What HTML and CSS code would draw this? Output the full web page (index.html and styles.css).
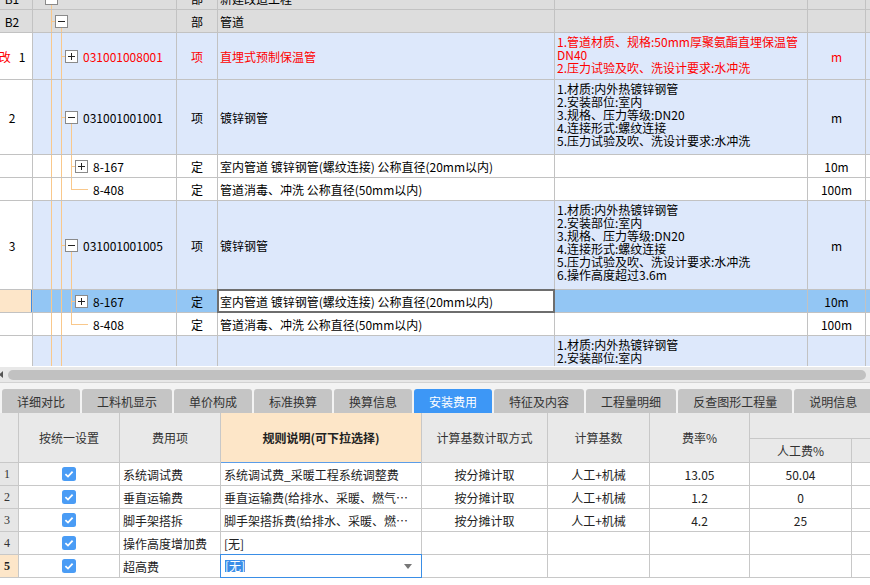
FILE: index.html
```html
<!DOCTYPE html>
<html lang="zh-CN">
<head>
<meta charset="utf-8">
<title>安装费用</title>
<link rel="stylesheet" href="styles.css">
</head>
<body>
<div class="top">
  <div class="tgrid">
    <div class="row r-grey">
      <div class="lab">B1</div>
      <div class="tree t0"><svg class="bx" width="13" height="13" viewBox="0 0 13 13"><rect x="0.5" y="0.5" width="12" height="12" fill="#fff" stroke="#8a8a8a"/><path d="M3 6.5h7" stroke="#222"/></svg></div>
      <div class="typ">部</div>
      <div class="nm">新建改造工程</div>
      <div class="ds"></div>
      <div class="un"></div>
      <div class="ex"></div>
    </div>
    <div class="row r-grey">
      <div class="lab">B2</div>
      <div class="tree t1"><svg class="bx" width="13" height="13" viewBox="0 0 13 13"><rect x="0.5" y="0.5" width="12" height="12" fill="#fff" stroke="#8a8a8a"/><path d="M3 6.5h7" stroke="#222"/></svg></div>
      <div class="typ">部</div>
      <div class="nm">管道</div>
      <div class="ds"></div>
      <div class="un"></div>
      <div class="ex"></div>
    </div>
    <div class="row r-blue red">
      <div class="lab"><span class="mod">改</span><span class="blk">1</span></div>
      <div class="tree t2c"><svg class="bx" width="13" height="13" viewBox="0 0 13 13"><rect x="0.5" y="0.5" width="12" height="12" fill="#fff" stroke="#8a8a8a"/><path d="M3 6.5h7M6.5 3v7" stroke="#222"/></svg><span class="code">031001008001</span></div>
      <div class="typ">项</div>
      <div class="nm">直埋式预制保温管</div>
      <div class="ds">1.管道材质、规格:50mm厚聚氨酯直埋保温管<br>DN40<br>2.压力试验及吹、洗设计要求:水冲洗</div>
      <div class="un">m</div>
      <div class="ex"></div>
    </div>
    <div class="row r-blue">
      <div class="lab">2</div>
      <div class="tree t2e"><svg class="bx" width="13" height="13" viewBox="0 0 13 13"><rect x="0.5" y="0.5" width="12" height="12" fill="#fff" stroke="#8a8a8a"/><path d="M3 6.5h7" stroke="#222"/></svg><span class="code">031001001001</span></div>
      <div class="typ">项</div>
      <div class="nm">镀锌钢管</div>
      <div class="ds">1.材质:内外热镀锌钢管<br>2.安装部位:室内<br>3.规格、压力等级:DN20<br>4.连接形式:螺纹连接<br>5.压力试验及吹、洗设计要求:水冲洗</div>
      <div class="un">m</div>
      <div class="ex"></div>
    </div>
    <div class="row r-white">
      <div class="lab"></div>
      <div class="tree t3"><svg class="bx" width="13" height="13" viewBox="0 0 13 13"><rect x="0.5" y="0.5" width="12" height="12" fill="#fff" stroke="#8a8a8a"/><path d="M3 6.5h7M6.5 3v7" stroke="#222"/></svg><span class="code">8-167</span></div>
      <div class="typ">定</div>
      <div class="nm">室内管道 镀锌钢管(螺纹连接) 公称直径(20mm以内)</div>
      <div class="ds"></div>
      <div class="un">10m</div>
      <div class="ex"></div>
    </div>
    <div class="row r-white">
      <div class="lab"></div>
      <div class="tree t3l"><span class="code">8-408</span></div>
      <div class="typ">定</div>
      <div class="nm">管道消毒、冲洗 公称直径(50mm以内)</div>
      <div class="ds"></div>
      <div class="un">100m</div>
      <div class="ex"></div>
    </div>
    <div class="row r-blue">
      <div class="lab">3</div>
      <div class="tree t2e"><svg class="bx" width="13" height="13" viewBox="0 0 13 13"><rect x="0.5" y="0.5" width="12" height="12" fill="#fff" stroke="#8a8a8a"/><path d="M3 6.5h7" stroke="#222"/></svg><span class="code">031001001005</span></div>
      <div class="typ">项</div>
      <div class="nm">镀锌钢管</div>
      <div class="ds">1.材质:内外热镀锌钢管<br>2.安装部位:室内<br>3.规格、压力等级:DN20<br>4.连接形式:螺纹连接<br>5.压力试验及吹、洗设计要求:水冲洗<br>6.操作高度超过3.6m</div>
      <div class="un">m</div>
      <div class="ex"></div>
    </div>
    <div class="row r-sel">
      <div class="lab"></div>
      <div class="tree t3"><svg class="bx" width="13" height="13" viewBox="0 0 13 13"><rect x="0.5" y="0.5" width="12" height="12" fill="#fff" stroke="#8a8a8a"/><path d="M3 6.5h7M6.5 3v7" stroke="#222"/></svg><span class="code">8-167</span></div>
      <div class="typ">定</div>
      <div class="nm">室内管道 镀锌钢管(螺纹连接) 公称直径(20mm以内)</div>
      <div class="ds"></div>
      <div class="un">10m</div>
      <div class="ex"></div>
    </div>
    <div class="row r-white">
      <div class="lab"></div>
      <div class="tree t3l"><span class="code">8-408</span></div>
      <div class="typ">定</div>
      <div class="nm">管道消毒、冲洗 公称直径(50mm以内)</div>
      <div class="ds"></div>
      <div class="un">100m</div>
      <div class="ex"></div>
    </div>
    <div class="row r-blue">
      <div class="lab"></div>
      <div class="tree t2n"></div>
      <div class="typ"></div>
      <div class="nm"></div>
      <div class="ds">1.材质:内外热镀锌钢管<br>2.安装部位:室内</div>
      <div class="un"></div>
      <div class="ex"></div>
    </div>
  </div>
</div>

<div class="hscroll">
  <svg class="harrow" width="4" height="7" viewBox="0 0 4 7"><path d="M0 3.5L4 0V7Z" fill="#555"/></svg>
  <div class="thumb"></div>
</div>

<div class="tabs">
  <div class="tab">详细对比</div>
  <div class="tab">工料机显示</div>
  <div class="tab">单价构成</div>
  <div class="tab">标准换算</div>
  <div class="tab">换算信息</div>
  <div class="tab active">安装费用</div>
  <div class="tab">特征及内容</div>
  <div class="tab">工程量明细</div>
  <div class="tab">反查图形工程量</div>
  <div class="tab">说明信息</div>
</div>

<div class="bgrid">
  <div class="bh"></div>
  <div class="bh">按统一设置</div>
  <div class="bh">费用项</div>
  <div class="bh hl">规则说明(可下拉选择)</div>
  <div class="bh">计算基数计取方式</div>
  <div class="bh">计算基数</div>
  <div class="bh">费率%</div>
  <div class="bg"></div>
  <div class="bs">人工费%</div>
  <div class="bs"></div>

  <div class="bl">1</div>
  <div class="cb"><svg width="14" height="14" viewBox="0 0 14 14"><rect width="14" height="14" rx="2.5" fill="#4a9cf5"/><path d="M3.4 7.2L6 9.6L10.6 4.7" fill="none" stroke="#fff" stroke-width="1.8"/></svg></div>
  <div class="tx">系统调试费</div>
  <div class="tx">系统调试费_采暖工程系统调整费</div>
  <div class="ct">按分摊计取</div>
  <div class="ct">人工+机械</div>
  <div class="ct">13.05</div>
  <div class="ct">50.04</div>
  <div></div>

  <div class="bl">2</div>
  <div class="cb"><svg width="14" height="14" viewBox="0 0 14 14"><rect width="14" height="14" rx="2.5" fill="#4a9cf5"/><path d="M3.4 7.2L6 9.6L10.6 4.7" fill="none" stroke="#fff" stroke-width="1.8"/></svg></div>
  <div class="tx">垂直运输费</div>
  <div class="tx">垂直运输费(给排水、采暖、燃气…</div>
  <div class="ct">按分摊计取</div>
  <div class="ct">人工+机械</div>
  <div class="ct">1.2</div>
  <div class="ct">0</div>
  <div></div>

  <div class="bl">3</div>
  <div class="cb"><svg width="14" height="14" viewBox="0 0 14 14"><rect width="14" height="14" rx="2.5" fill="#4a9cf5"/><path d="M3.4 7.2L6 9.6L10.6 4.7" fill="none" stroke="#fff" stroke-width="1.8"/></svg></div>
  <div class="tx">脚手架搭拆</div>
  <div class="tx">脚手架搭拆费(给排水、采暖、燃…</div>
  <div class="ct">按分摊计取</div>
  <div class="ct">人工+机械</div>
  <div class="ct">4.2</div>
  <div class="ct">25</div>
  <div></div>

  <div class="bl">4</div>
  <div class="cb"><svg width="14" height="14" viewBox="0 0 14 14"><rect width="14" height="14" rx="2.5" fill="#4a9cf5"/><path d="M3.4 7.2L6 9.6L10.6 4.7" fill="none" stroke="#fff" stroke-width="1.8"/></svg></div>
  <div class="tx">操作高度增加费</div>
  <div class="tx">[无]</div>
  <div></div>
  <div></div>
  <div></div>
  <div></div>
  <div></div>

  <div class="bl act">5</div>
  <div class="cb"><svg width="14" height="14" viewBox="0 0 14 14"><rect width="14" height="14" rx="2.5" fill="#4a9cf5"/><path d="M3.4 7.2L6 9.6L10.6 4.7" fill="none" stroke="#fff" stroke-width="1.8"/></svg></div>
  <div class="tx">超高费</div>
  <div class="tx edit"><span class="selt">[无]</span><svg class="dd" width="8" height="5" viewBox="0 0 8 5"><path d="M0 0H8L4 5Z" fill="#777"/></svg></div>
  <div></div>
  <div></div>
  <div></div>
  <div></div>
  <div></div>
</div>
</body>
</html>
```

FILE: styles.css
```css
* { box-sizing: border-box; }
html, body { margin: 0; padding: 0; }
body {
  width: 870px;
  height: 585px;
  overflow: hidden;
  background: #fff;
  font-family: "Noto Sans CJK SC", "Noto Sans", sans-serif;
  font-size: 12px;
  color: #000;
}

/* ---------- top grid ---------- */
.top {
  height: 366px;
  overflow: hidden;
  background: #fff;
}
.tgrid {
  display: grid;
  grid-template-columns: 32px 143px 40px 336px 252px 57px 1fr;
  grid-template-rows: 22px 22px 46px 74px 22px 22px 88px 22px 22px 88px;
  gap: 1px;
  background: #c2c2c2;
  margin-top: -13px;
}
.row { display: contents; }
.row > div {
  background-color: #fff;
  display: flex;
  align-items: center;
  white-space: nowrap;
  overflow: hidden;
  line-height: 13px;
}
.r-grey > div { background-color: #dddddd; }
.r-blue > div { background-color: #dde8fb; }
.r-blue > .lab { background-color: #fff; }
.r-sel > div { background-color: #93c6f4; }
.r-sel > .lab { background-color: #fde6c9; box-shadow: inset -1px 0 0 #3d8de6; }
.r-sel > .nm {
  background-color: #fff;
  overflow: visible;
  box-shadow: inset 0 0 0 1px #6e6e6e;
  outline: 1px solid #6e6e6e;
}
.red { color: #ff0000; }
.red .blk { color: #000; }

.lab { justify-content: center; padding-right: 8px; }
.mod { margin-right: 8px; }
.typ { justify-content: center; }
.nm { padding-left: 2px; }
.row > .ds { display: block; padding: 2px 0 0 2px; }
.un { justify-content: center; }

/* tree guide lines */
.tree {
  --o: linear-gradient(#f9c88b, #f9c88b);
  background-repeat: no-repeat;
}
.bx { flex: none; }
.code { margin-left: 5px; }
.t0 {
  padding-left: 12px;
  background-image: var(--o);
  background-size: 1px 50%;
  background-position: 18px 100%;
}
.t1 {
  padding-left: 22px;
  background-image: var(--o), var(--o), var(--o);
  background-size: 1px 100%, 1px 50%, 4px 1px;
  background-position: 18px 0, 28px 100%, 18px 50%;
}
.t2c {
  padding-left: 32px;
  background-image: var(--o), var(--o), var(--o);
  background-size: 1px 100%, 1px 100%, 4px 1px;
  background-position: 18px 0, 28px 0, 28px 50%;
}
.t2e {
  padding-left: 32px;
  background-image: var(--o), var(--o), var(--o), var(--o);
  background-size: 1px 100%, 1px 100%, 4px 1px, 1px 50%;
  background-position: 18px 0, 28px 0, 28px 50%, 38px 100%;
}
.t3 {
  padding-left: 42px;
  background-image: var(--o), var(--o), var(--o), var(--o);
  background-size: 1px 100%, 1px 100%, 1px 100%, 4px 1px;
  background-position: 18px 0, 28px 0, 38px 0, 38px 50%;
}
.t3l {
  padding-left: 55px;
  background-image: var(--o), var(--o), var(--o), var(--o);
  background-size: 1px 100%, 1px 100%, 1px 50%, 17px 1px;
  background-position: 18px 0, 28px 0, 38px 0, 38px 50%;
}
.t2n {
  background-image: var(--o), var(--o);
  background-size: 1px 100%, 1px 100%;
  background-position: 18px 0, 28px 0;
}

/* ---------- scrollbar ---------- */
.hscroll {
  height: 16px;
  border-top: 1px solid #fff;
  background: #e8e8e8;
  display: flex;
  align-items: center;
}
.harrow { flex: none; margin-left: -1px; }
.thumb {
  flex: 1;
  height: 10px;
  margin: 0 4px 0 5px;
  border-radius: 5px;
  background: #c1c1c1;
}

/* ---------- tabs ---------- */
.tabs {
  height: 31px;
  border-top: 1px solid #d2d2d2;
  background: #f3f3f3;
  padding: 6px 0 0 2px;
  display: flex;
  gap: 2px;
  overflow: hidden;
}
.tab {
  flex: none;
  height: 24px;
  padding: 0 15px;
  border-radius: 3px 3px 0 0;
  background: #c5c5c5;
  color: #333;
  display: flex;
  align-items: center;
  justify-content: center;
  white-space: nowrap;
}
.tab.active { background: #3d97f6; color: #fff; }

/* ---------- bottom grid ---------- */
.bgrid {
  display: grid;
  grid-template-columns: 18px 100px 100px 200px 125px 101px 99px 101px 1fr;
  grid-template-rows: 25px 23px repeat(5, 22px);
  gap: 1px;
  background: #c8c8c8;
  border-bottom: 1px solid #c8c8c8;
}
.bgrid > div {
  background: #fff;
  display: flex;
  align-items: center;
  white-space: nowrap;
  overflow: hidden;
  color: #222;
}
.bgrid > .bh {
  grid-row: span 2;
  background: #e9e9e9;
  color: #333;
  justify-content: center;
}
.bgrid > .hl {
  background: #fde6c8;
  font-weight: bold;
  color: #222;
  overflow: visible;
  box-shadow: 0 1px 0 #5b9de8;
}
.bgrid > .bg { grid-column: span 2; background: #e9e9e9; }
.bgrid > .bs { background: #e9e9e9; color: #333; justify-content: center; }
.bgrid > .bl {
  background: #e6e6e6;
  padding-left: 4px;
  font-family: "Liberation Serif", "DejaVu Serif", serif;
  color: #333;
}
.bgrid > .bl.act { background: #fde6c9; font-weight: bold; color: #222; }
.bgrid > .cb { justify-content: center; }
.bgrid > .tx { padding-left: 3px; }
.bgrid > .ct { justify-content: center; }
.bgrid > .edit {
  overflow: visible;
  outline: 1px solid #3a8ee6;
  padding-left: 4px;
}
.selt {
  background: #3a8ee8;
  color: #fff;
  line-height: 12px;
}
.dd { margin-left: auto; margin-right: 9px; }
```
